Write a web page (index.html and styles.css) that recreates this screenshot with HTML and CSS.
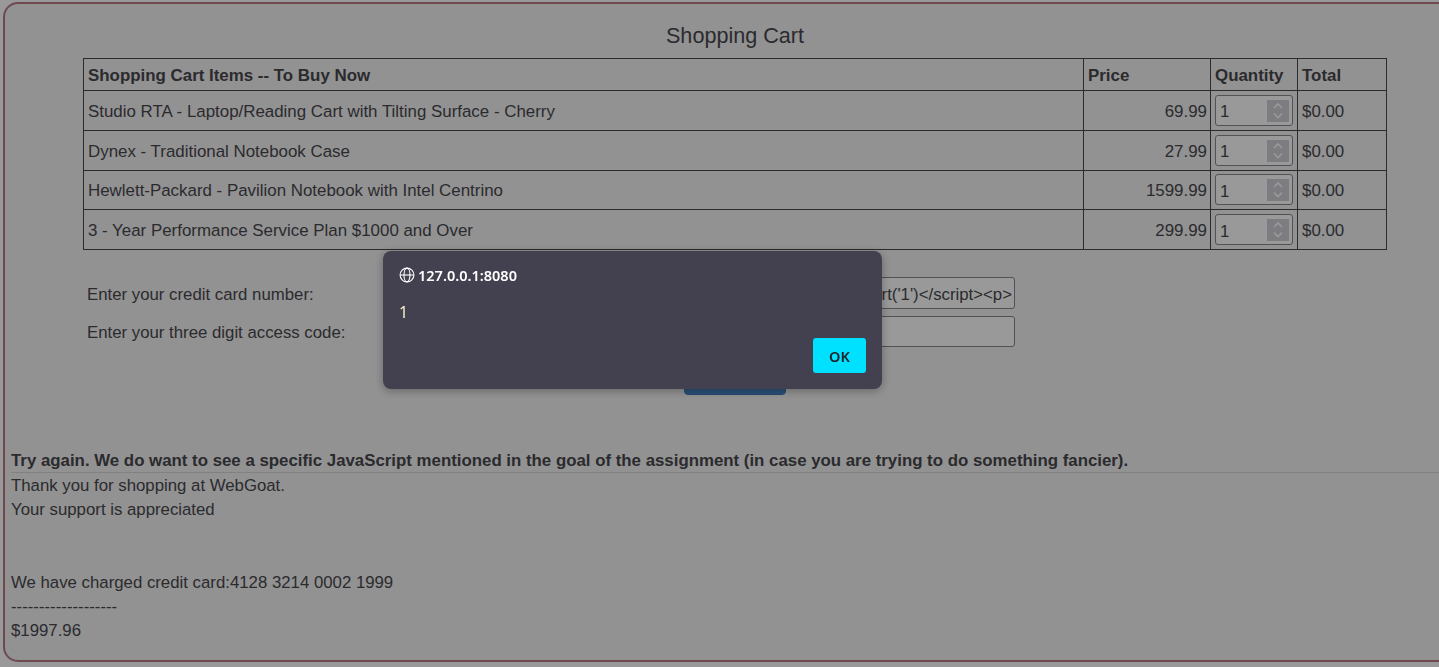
FILE: index.html
```html
<!DOCTYPE html>
<html lang="en">
<head>
    <meta charset="UTF-8">
    <title>Shopping Cart</title>
    <link rel="stylesheet" href="styles.css">
</head>
<body>
    <div class="lesson-box">
        <h2 class="cart-title">Shopping Cart</h2>
        <table class="cart-table">
            <tr>
                <th class="col-item">Shopping Cart Items -- To Buy Now</th>
                <th class="col-price">Price</th>
                <th class="col-qty">Quantity</th>
                <th>Total</th>
            </tr>
            <tr>
                <td>Studio RTA - Laptop/Reading Cart with Tilting Surface - Cherry</td>
                <td class="price">69.99</td>
                <td class="qty-cell">
                    <div class="qty-wrap">
                        <input class="qty" type="number" value="1">
                        <span class="spin"><svg viewBox="0 0 22 22" width="22" height="22" fill="none" stroke="#fff" stroke-width="1.6"><path d="M7 8l4-4 4 4M7 13.500l4 4 4-4"/></svg></span>
                    </div>
                </td>
                <td>$0.00</td>
            </tr>
            <tr>
                <td>Dynex - Traditional Notebook Case</td>
                <td class="price">27.99</td>
                <td class="qty-cell">
                    <div class="qty-wrap">
                        <input class="qty" type="number" value="1">
                        <span class="spin"><svg viewBox="0 0 22 22" width="22" height="22" fill="none" stroke="#fff" stroke-width="1.6"><path d="M7 8l4-4 4 4M7 13.500l4 4 4-4"/></svg></span>
                    </div>
                </td>
                <td>$0.00</td>
            </tr>
            <tr>
                <td>Hewlett-Packard - Pavilion Notebook with Intel Centrino</td>
                <td class="price">1599.99</td>
                <td class="qty-cell">
                    <div class="qty-wrap">
                        <input class="qty" type="number" value="1">
                        <span class="spin"><svg viewBox="0 0 22 22" width="22" height="22" fill="none" stroke="#fff" stroke-width="1.6"><path d="M7 8l4-4 4 4M7 13.500l4 4 4-4"/></svg></span>
                    </div>
                </td>
                <td>$0.00</td>
            </tr>
            <tr>
                <td>3 - Year Performance Service Plan $1000 and Over</td>
                <td class="price">299.99</td>
                <td class="qty-cell">
                    <div class="qty-wrap">
                        <input class="qty" type="number" value="1">
                        <span class="spin"><svg viewBox="0 0 22 22" width="22" height="22" fill="none" stroke="#fff" stroke-width="1.6"><path d="M7 8l4-4 4 4M7 13.500l4 4 4-4"/></svg></span>
                    </div>
                </td>
                <td>$0.00</td>
            </tr>
        </table>

        <form class="pay-form">
            <label class="pay-label" for="card">Enter your credit card number:</label>
            <input id="card" class="pay-input" type="text" value="<script>alert('1')</script><p>">
            <label class="pay-label" for="code">Enter your three digit access code:</label>
            <input id="code" class="pay-input" type="text">
            <button class="purchase" type="button">Purchase</button>
        </form>

        <div class="feedback">
            <p class="try-again">Try again. We do want to see a specific JavaScript mentioned in the goal of the assignment (in case you are trying to do something fancier).</p>
            <hr class="rule">
            <p>Thank you for shopping at WebGoat.<br>Your support is appreciated</p>
            <p class="charged">We have charged credit card:4128 3214 0002 1999<br>-------------------<br>$1997.96</p>
        </div>
    </div>

    <div class="overlay"></div>
    <div class="alert-box">
        <div class="alert-origin">
            <svg class="globe" viewBox="0 0 16 16" width="16" height="16" fill="none" stroke="#fff" stroke-width="1.1">
                <circle cx="8" cy="8" r="6.9"/>
                <ellipse cx="8" cy="8" rx="3" ry="6.9"/>
                <path d="M1.1 8h13.8"/>
            </svg>
            <span>127.0.0.1:8080</span>
        </div>
        <div class="alert-text">1</div>
        <div class="alert-actions">
            <button class="alert-ok" type="button">OK</button>
        </div>
    </div>
</body>
</html>
```

FILE: styles.css
```css
html {
    background-color: #fff;
}

body {
    margin: 0;
    height: 667px;
    overflow: hidden;
    font-family: "Liberation Sans", Arial, sans-serif;
    font-size: 16.8px;
    line-height: 24px;
    color: #49494e;
}

.lesson-box {
    box-sizing: border-box;
    width: 1500px;
    height: 660px;
    margin: 2px 0 0 3px;
    border: 2px solid #b97b86;
    border-radius: 15px;
    background-color: #f4f3f4;
}

.cart-title {
    width: 1304px;
    margin: 0 0 0 78px;
    padding-top: 19px;
    height: 35px;
    font-size: 21.6px;
    font-weight: 400;
    line-height: 26px;
    text-align: center;
}

.cart-table {
    width: 1304px;
    margin-left: 78px;
    border-collapse: collapse;
    table-layout: fixed;
    font-size: 16.9px;
}

.cart-table th,
.cart-table td {
    border: 1px solid #484848;
    text-align: left;
}

.cart-table th {
    height: 25px;
    padding: 4px 4px 2px;
}

.cart-table td {
    height: 32.75px;
    padding: 4.5px 4px 1.5px;
}

.col-price {
    width: 118px;
}

.col-qty {
    width: 78px;
}

.cart-table th:last-child {
    width: 80px;
}

.cart-table .price {
    padding-right: 3px;
    text-align: right;
}

.cart-table .qty-cell {
    padding: 3px 4px;
}

.qty-wrap {
    position: relative;
    width: 78px;
}

.qty {
    box-sizing: border-box;
    display: block;
    width: 78px;
    height: 31px;
    padding: 4px 2px 0 4px;
    border: 1px solid #88888f;
    border-radius: 3px;
    background-color: #fff;
    color: #49494e;
    font: 16.9px "Liberation Sans", Arial, sans-serif;
}

.qty::-webkit-inner-spin-button {
    display: none;
}

.spin {
    position: absolute;
    top: 5px;
    right: 4px;
    width: 22px;
    height: 22px;
    background-color: #d1d0d8;
}

.spin svg {
    display: block;
}

.pay-form {
    display: grid;
    grid-template-columns: 364px 564px;
    row-gap: 7px;
    align-items: center;
    width: 1304px;
    margin: 27px 0 0 78px;
    padding-left: 4px;
    box-sizing: border-box;
}

.pay-label {
    padding-top: 3.5px;
}

.pay-input {
    box-sizing: border-box;
    width: 564px;
    height: 32px;
    padding: 3px 2px 0;
    border: 1px solid #88888f;
    border-radius: 3px;
    color: #49494e;
    text-align: right;
    font: 16.8px "Liberation Sans", Arial, sans-serif;
}

#code {
    height: 31px;
}

.purchase {
    grid-column: 1 / 3;
    justify-self: start;
    box-sizing: border-box;
    width: 102px;
    height: 32px;
    margin: 9px 0 0 597px;
    border: 1px solid #3f78b8;
    border-radius: 4px;
    background-color: #4683c6;
    color: #fff;
    font: 14px "Liberation Sans", Arial, sans-serif;
}

.feedback {
    margin: 54px 0 0 6px;
}

.feedback p {
    margin: 0;
}

.try-again {
    font-size: 16.83px;
    font-weight: 700;
}

.rule {
    height: 1px;
    margin: -1px 0 1px;
    border: 0;
    background-color: #d8d8d8;
}

.charged {
    padding-top: 49px;
}

.overlay {
    position: fixed;
    inset: 0;
    background-color: rgba(0, 0, 0, 0.4);
}

.alert-box {
    position: fixed;
    top: 251px;
    left: 383px;
    box-sizing: border-box;
    width: 499px;
    height: 138px;
    padding: 14px 16px;
    border-radius: 8px;
    background-color: #434150;
    box-shadow: 0 2px 10px rgba(0, 0, 0, 0.3);
    font-family: "Noto Sans", "Open Sans", sans-serif;
    font-size: 14.5px;
    line-height: 20px;
}

.alert-origin {
    display: flex;
    align-items: center;
    gap: 3px;
    color: #fff;
    font-weight: 600;
}

.alert-text {
    margin-top: 17px;
    color: #f3efc8;
    font-size: 16px;
}

.alert-actions {
    display: flex;
    justify-content: flex-end;
    margin-top: 16px;
}

.alert-ok {
    width: 53px;
    height: 35px;
    padding: 0;
    border: 0;
    border-radius: 3px;
    background-color: #00e0ff;
    color: #202124;
    font-family: inherit;
    font-size: 14.5px;
    font-weight: 600;
}
```
